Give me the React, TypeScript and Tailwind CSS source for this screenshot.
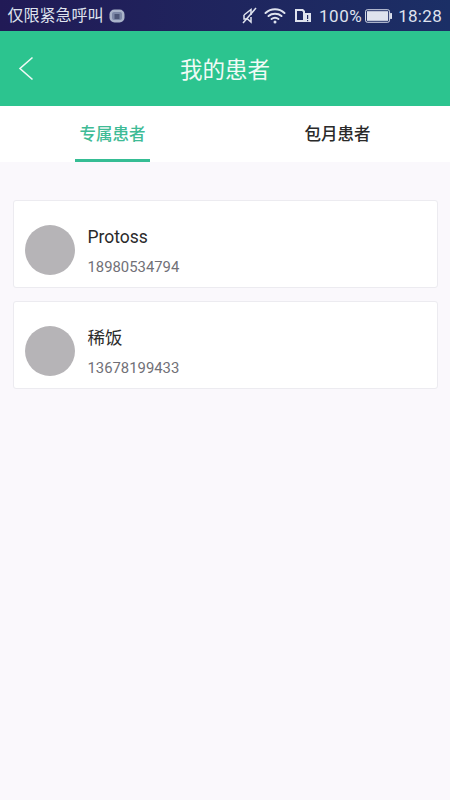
import React from "react";

const font = { fontFamily: 'Roboto, "Noto Sans CJK SC", sans-serif' };

function Patient({ name, phone }: { name: string; phone: string }) {
  return (
    <div className="h-[88px] rounded-[3px] border border-[#ecebf0] bg-white flex items-start pl-[11.5px] pt-[24px]">
      <div className="w-[50px] h-[50px] rounded-full bg-[#b6b4b7] shrink-0" />
      <div className="ml-[12.5px] flex flex-col">
        <div className="text-[17.5px] leading-[24px] text-[#2a2a2a]">{name}</div>
        <div className="mt-[8px] text-[14.85px] leading-[20px] text-[#717077]">{phone}</div>
      </div>
    </div>
  );
}

export default function App() {
  return (
    <div className="w-[450px] h-[800px] bg-[#faf8fc] flex flex-col overflow-hidden" style={font}>
      <div className="h-[31px] bg-gradient-to-r from-[#211a56] to-[#1b2f66] flex items-center justify-between pl-[7.5px] pr-[8px] text-[#dfe3ee]">
        <div className="flex items-center gap-[5px]">
          <span className="text-[16px] leading-[20px]">仅限紧急呼叫</span>
          <svg width="16" height="14" viewBox="0 0 16 14">
            <rect x="0.5" y="0.5" width="15" height="13" rx="5" fill="#aab3ca" />
            <rect x="3" y="3" width="10" height="8" rx="2" fill="#7d88a8" />
            <rect x="5.5" y="5" width="5" height="5" fill="#4d5678" />
          </svg>
        </div>
        <div className="flex items-center">
          <svg width="15" height="17" viewBox="0 0 15 17" fill="none" stroke="#dfe3ee" strokeWidth="1.5">
            <path d="M2 8 L9 2.5 V8 M2 8 V12 H5.5 L9 15 V10" />
            <path d="M1 16 L14 1" />
          </svg>
          <svg className="ml-[7px]" width="22" height="17" viewBox="0 0 22 17" fill="none" stroke="#dfe3ee" strokeWidth="2" strokeLinecap="round">
            <path d="M1.5 6 C7 1 15 1 20.5 6" />
            <path d="M4.5 9 C8 6 14 6 17.5 9" />
            <path d="M7.5 12 C9.5 10.5 12.5 10.5 14.5 12" />
            <circle cx="11" cy="15" r="1.5" fill="#dfe3ee" stroke="none" />
          </svg>
          <svg className="ml-[8px]" width="17" height="15" viewBox="0 0 17 15">
            <path d="M1 1 H9 L11 3 V14 H1 Z M3 3 V12 H9 V4 L8 3 Z" fill="#dfe3ee" fillRule="evenodd" />
            <rect x="10" y="5" width="7" height="9" fill="#dfe3ee" />
            <rect x="13" y="7" width="1.2" height="4" fill="#1e2a62" />
            <rect x="13" y="12" width="1.2" height="1.2" fill="#1e2a62" />
          </svg>
          <span className="ml-[8px] text-[17px] leading-[20px] tracking-[0.5px]">100%</span>
          <svg className="ml-[3px]" width="27" height="14" viewBox="0 0 28 14">
            <rect x="0.5" y="0.5" width="25" height="13" rx="2" fill="none" stroke="#dfe3ee" />
            <rect x="2" y="2" width="22" height="10" fill="#dfe3ee" />
            <rect x="26" y="4" width="2" height="6" fill="#dfe3ee" />
          </svg>
          <span className="ml-[6px] text-[17px] leading-[20px] tracking-[0.3px]">18:28</span>
        </div>
      </div>

      <div className="relative h-[75px] bg-[#2cc48f] flex items-center justify-center">
        <svg className="absolute left-[18px] top-[25px]" width="16" height="25" viewBox="0 0 16 25" fill="none" stroke="#eef9f5" strokeWidth="1.6">
          <path d="M14.5 1.5 L2 12.5 L14.5 23.5" />
        </svg>
        <span className="text-[22.5px] leading-[28px] mt-[3px] text-[#f0faf6]">我的患者</span>
      </div>

      <div className="h-[56px] bg-white flex">
        <div className="flex-1 flex justify-center">
          <div className="w-[75px] h-full border-b-[3px] border-[#35bd94] flex justify-center pt-[17px]">
            <span className="text-[16.5px] leading-[24px] font-medium text-[#3fbb96] whitespace-nowrap">专属患者</span>
          </div>
        </div>
        <div className="flex-1 flex justify-center pt-[17px]">
          <span className="text-[16.5px] leading-[24px] font-medium text-[#2a2a2a]">包月患者</span>
        </div>
      </div>

      <div className="pl-[12.5px] pr-[12.5px] pt-[38px] flex flex-col gap-[13px]">
        <Patient name="Protoss" phone="18980534794" />
        <Patient name="稀饭" phone="13678199433" />
      </div>
    </div>
  );
}
